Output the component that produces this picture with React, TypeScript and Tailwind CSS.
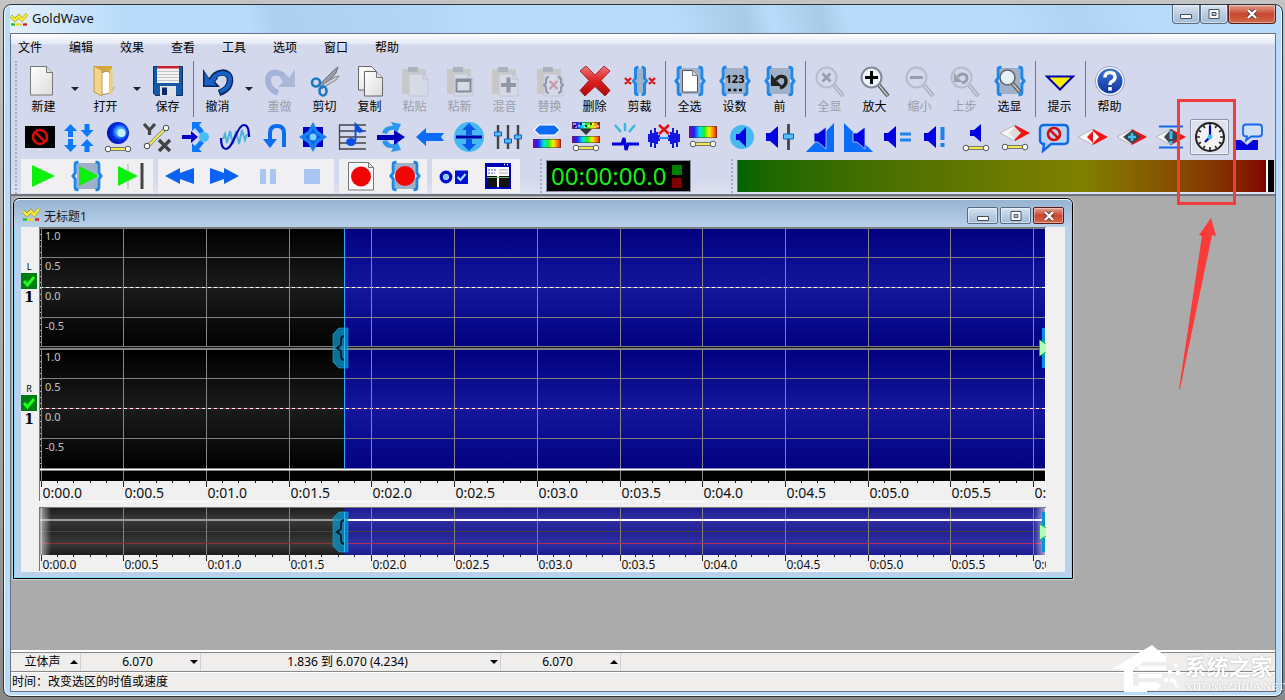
/**
 * App.tsx
 *
 * GoldWave main window: menu, tool bars, one open sound document and the
 * status bars at the bottom.
 */

import type { ReactNode } from 'react';
import clsx from 'clsx';

interface IconProps {
  readonly children: ReactNode;
  readonly className?: string;
}

function Icon({ children, className }: IconProps): React.JSX.Element {
  return (
    <svg
      viewBox="0 0 32 32"
      className={clsx('h-8 w-8 shrink-0', className)}
      fill="none"
      aria-hidden="true"
    >
      {children}
    </svg>
  );
}

/* ---------- Shared icon parts ---------- */

/** Pair of blue braces with the grey selection block behind. */
function Braces(): React.JSX.Element {
  return (
    <>
      <rect x="6" y="3" width="20" height="26" fill="#9fb0c9" />
      <g stroke="#1f86ea" strokeWidth="3">
        <path d="M7.500 2.300H6.500Q4.200 2.300 4.200 4.500V13L2 16 4.200 19V27.500Q4.200 29.700 6.500 29.700h1" />
        <path d="M24.500 2.300h1q2.300 0 2.300 2.200V13l2.200 3-2.200 3v8.500q0 2.200-2.300 2.200h-1" />
      </g>
    </>
  );
}

function Speaker({ x = 0, y = 0 }: { readonly x?: number; readonly y?: number }): React.JSX.Element {
  return (
    <path
      transform={`translate(${x} ${y})`}
      d="M3 12h4l8-7v22l-8-7H3z"
      fill="#0000e0"
    />
  );
}

/** Yellow line between two white handles. */
function Link({ y = 27 }: { readonly y?: number }): React.JSX.Element {
  return (
    <>
      <path d={`M6 ${y}H26`} stroke="#777" strokeWidth="4" />
      <path d={`M6 ${y}H26`} stroke="#f3e84a" strokeWidth="2" />
      <circle cx="6" cy={y} r="2.8" fill="#fff" stroke="#555" />
      <circle cx="26" cy={y} r="2.8" fill="#fff" stroke="#555" />
    </>
  );
}

function Rainbow({ y, h = 9 }: { readonly y: number; readonly h?: number }): React.JSX.Element {
  return (
    <>
      <rect x="2" y={y} width="28" height={h} fill="url(#rainbow)" />
      <rect x="2.5" y={y + 0.5} width="27" height={h - 1} stroke="#333" strokeOpacity=".5" />
    </>
  );
}

function Clipboard({ children }: { readonly children?: ReactNode }): React.JSX.Element {
  return (
    <g opacity=".75">
      <path d="M3 4h24v25H3z" fill="#c8c2bd" />
      <path d="M9 2h10v5H9z" fill="#9fa5b2" />
      <path d="M10 9h14l5 5v17H10z" fill="#d8dbe4" stroke="#bcc1cf" />
      <path d="M24 9v5h5" stroke="#b5bac8" />
      {children}
    </g>
  );
}

function Lens({ off, children }: { readonly off?: boolean; readonly children?: ReactNode }): React.JSX.Element {
  return (
    <g opacity={off ? 0.35 : 1}>
      <path d="M20 20l9 11" stroke="#555" strokeWidth="4" />
      <path d="M20 20l8.5 10.5" stroke="#c9ccd1" strokeWidth="1.6" />
      <circle cx="12.5" cy="12.5" r="10" fill={off ? '#d6daea' : '#eef5fc'} stroke="#858b98" strokeWidth="2" />
      {children}
    </g>
  );
}

function UndoArrow(): React.JSX.Element {
  return (
    <>
      <path d="M10 16C12 6 28 4 28 15q0 9-11 13" stroke="#06265e" strokeWidth="6.5" />
      <path d="M1 4v18h17l-5-5.5 3-3-5-4.5-4 4z" fill="#06265e" />
      <path d="M10 15.5C13 7 28 5 28 15q0 8-10 12" stroke="#1762c4" strokeWidth="4" />
      <path d="M2.5 7v13.5h12l-3-3.5 3-3-3.5-3-3.5 4z" fill="#1762c4" />
    </>
  );
}

function Document(): React.JSX.Element {
  return (
    <>
      <path d="M2.5 1.5h16l6 6V30h-22z" fill="url(#paper)" stroke="#777" />
      <path d="M18.5 1.5v6h6" fill="#ddd" stroke="#777" />
    </>
  );
}

function Diamond(): React.JSX.Element {
  return (
    <>
      <path d="M1 16L16 8v16z" fill="#f6f6f6" stroke="#aaa" strokeWidth=".8" />
      <path d="M31 16L16 8v16z" fill="#f01414" />
    </>
  );
}

function Ban({ x, y, r }: { readonly x: number; readonly y: number; readonly r: number }): React.JSX.Element {
  const d = r * 0.7;
  return (
    <g stroke="#d80a0a" strokeWidth="2.6">
      <circle cx={x} cy={y} r={r} />
      <path d={`M${x - d} ${y - d}L${x + d} ${y + d}`} />
    </g>
  );
}

/** Gradients used by several icons. */
function IconDefs(): React.JSX.Element {
  return (
    <svg className="absolute h-0 w-0" aria-hidden="true">
      <defs>
        <linearGradient id="rainbow">
          <stop offset="0" stopColor="#8a00a8" />
          <stop offset=".18" stopColor="#2020ff" />
          <stop offset=".38" stopColor="#00e0f0" />
          <stop offset=".55" stopColor="#20f020" />
          <stop offset=".72" stopColor="#f8f000" />
          <stop offset=".88" stopColor="#ff7800" />
          <stop offset="1" stopColor="#f01010" />
        </linearGradient>
        <linearGradient id="paper" x2="1" y2="1">
          <stop offset="0" stopColor="#fff" />
          <stop offset="1" stopColor="#dcdcdc" />
        </linearGradient>
        <radialGradient id="ball" cx=".6" cy=".45" r=".6">
          <stop offset="0" stopColor="#b8ecff" />
          <stop offset=".35" stopColor="#3aa0ff" />
          <stop offset=".6" stopColor="#0530e8" />
          <stop offset="1" stopColor="#0010a8" />
        </radialGradient>
        <linearGradient id="redx" x2="0" y2="1">
          <stop offset="0" stopColor="#f07878" />
          <stop offset=".5" stopColor="#dc2020" />
          <stop offset="1" stopColor="#b00808" />
        </linearGradient>
        <linearGradient id="help" x2="0" y2="1">
          <stop offset="0" stopColor="#3f78dc" />
          <stop offset="1" stopColor="#0a2f9c" />
        </linearGradient>
      </defs>
    </svg>
  );
}

function WaveLogo(): React.JSX.Element {
  return (
    <svg viewBox="0 0 18 14" className="h-3.5 w-[18px] shrink-0" aria-hidden="true">
      <path d="M1 4l4 4 4-4 3 4 5-6" fill="none" stroke="#8a8a20" strokeWidth="3.2" />
      <path d="M1 4l4 4 4-4 3 4 5-6" fill="none" stroke="#f8ee30" strokeWidth="2.4" />
      <path d="M1 12.5h4" stroke="#20c030" strokeWidth="2.4" />
      <path d="M6 12.5h6" stroke="#f0d820" strokeWidth="2.4" />
      <path d="M13 12.5h4" stroke="#d82020" strokeWidth="2.4" />
    </svg>
  );
}

/* ---------- Tool bar data ---------- */

interface Tool {
  readonly label: string;
  readonly icon: ReactNode;
  readonly disabled?: boolean;
  readonly menu?: boolean;
  readonly separator?: boolean;
}

const MENUS = ['文件', '编辑', '效果', '查看', '工具', '选项', '窗口', '帮助'];

const MAIN_TOOLS: readonly Tool[] = [
  { label: '新建', menu: true, icon: <Document /> },
  {
    label: '打开',
    menu: true,
    icon: (
      <>
        <path d="M18 24l8-3-6 9z" fill="#9aa0b0" opacity=".5" />
        <path d="M4 1h18v26l-8 3z" fill="#d9a63c" />
        <path d="M11 8l6-2 3 2v20l-9 2z" fill="#fff" stroke="#999" />
        <path d="M20 4h2.500v24L19 30z" fill="#f2cd6c" />
        <path d="M4 1l8 4v26l-8-4z" fill="#f4d488" stroke="#b98a2c" strokeWidth=".8" />
      </>
    ),
  },
  {
    label: '保存',
    separator: true,
    icon: (
      <>
        <path d="M1.5 1.5h29v29h-27l-2-2z" fill="#1558a8" stroke="#0a2f63" />
        <path d="M5 1h22v17H5z" fill="#f3f3f3" />
        <path d="M5 1h22v2.500H5z" fill="#c8202c" />
        <path d="M5 6.5h22M5 9.5h22M5 12.5h22M5 15.5h22" stroke="#c5c5c5" />
        <path d="M8 21h16v10H8z" fill="#dfe3e8" />
        <path d="M10 22.5h5V30h-5z" fill="#0b2c66" />
      </>
    ),
  },
  { label: '撤消', menu: true, icon: <UndoArrow /> },
  {
    label: '重做',
    disabled: true,
    icon: (
      <>
        <path d="M22 16C20 6 4 4 4 15q0 9 10 13" stroke="#a3b2d6" strokeWidth="6" />
        <path d="M31 4v18H14l5-5.5-3-3 5-4.5 4 4z" fill="#a9b7d9" />
      </>
    ),
  },
  {
    label: '剪切',
    icon: (
      <>
        <path d="M10 20L25 5l4-3-2 6-14 16z" fill="#9a9fa6" stroke="#555" strokeWidth=".7" />
        <path d="M14 19L26 12l4-1-3 4-12 7z" fill="#c9ccd0" stroke="#666" strokeWidth=".7" />
        <circle cx="7" cy="17.5" r="4" stroke="#1b78c4" strokeWidth="2.6" />
        <ellipse cx="14" cy="26" rx="3.5" ry="4.5" stroke="#1b78c4" strokeWidth="2.6" />
      </>
    ),
  },
  {
    label: '复制',
    icon: (
      <>
        <path d="M4.5 1.5h13l5 5V25h-18z" fill="url(#paper)" stroke="#666" />
        <path d="M10.5 6.5h12l6 6V31h-18z" fill="url(#paper)" stroke="#666" />
        <path d="M22.5 6.5v6h6" fill="#ddd" stroke="#777" />
      </>
    ),
  },
  { label: '粘贴', disabled: true, icon: <Clipboard /> },
  {
    label: '粘新',
    disabled: true,
    icon: (
      <Clipboard>
        <path d="M12.5 14.5h14v12h-14zM12 16h15" stroke="#6c7280" strokeWidth="2" />
      </Clipboard>
    ),
  },
  {
    label: '混音',
    disabled: true,
    icon: (
      <Clipboard>
        <path d="M12 20h15M19.5 12.5v15" stroke="#7b8290" strokeWidth="4" />
      </Clipboard>
    ),
  },
  {
    label: '替换',
    disabled: true,
    icon: (
      <Clipboard>
        <path
          d="M15 12q-3 0-3 3v3l-2 2 2 2v3q0 3 3 3M24 12q3 0 3 3v3l2 2-2 2v3q0 3-3 3"
          stroke="#7b8290"
          strokeWidth="2"
        />
        <path d="M15.5 16l8 8M23.5 16l-8 8" stroke="#c08898" strokeWidth="2.4" />
      </Clipboard>
    ),
  },
  {
    label: '删除',
    icon: (
      <path
        d="M1 6l6-5 9 9 9-9 6 5-9 9.500 9 10L26 31l-10-9.500L6 31l-5-5.500 9-10z"
        fill="url(#redx)"
        stroke="#8e1010"
        strokeWidth=".8"
      />
    ),
  },
  {
    label: '剪裁',
    separator: true,
    icon: (
      <>
        <rect x="12" y="4" width="8" height="24" fill="#9fb0c9" />
        <path
          d="M14.5 2.5h-1q-2 0-2 2V13l-2 3 2 3v8.500q0 2 2 2h1M17.5 2.5h1q2 0 2 2V13l2 3-2 3v8.500q0 2-2 2h-1"
          stroke="#1f86ea"
          strokeWidth="3"
        />
        <path d="M1 13l6 6M7 13l-6 6M25 13l6 6M31 13l-6 6" stroke="#d81818" strokeWidth="2.4" />
      </>
    ),
  },
  {
    label: '全选',
    icon: (
      <>
        <Braces />
        <path d="M8.5 5.5h10l5 5V27h-15z" fill="#fff" stroke="#555" />
        <path d="M18.5 5.5v5h5" fill="#ddd" stroke="#777" />
      </>
    ),
  },
  {
    label: '设数',
    icon: (
      <>
        <Braces />
        <text
          x="16"
          y="18"
          textAnchor="middle"
          fontSize="11"
          fontWeight="700"
          fill="#111"
          fontFamily="Noto Sans, sans-serif"
        >
          123
        </text>
        <path d="M9 25h3M14.5 25h3M20 25h3" stroke="#111" strokeWidth="2.6" />
      </>
    ),
  },
  {
    label: '前',
    separator: true,
    icon: (
      <>
        <Braces />
        <path d="M12 15c2-5 10-5 10 1q0 5-6 7" stroke="#222" strokeWidth="3.4" />
        <path d="M7 9v12h11l-4-4-3-3z" fill="#222" />
      </>
    ),
  },
  {
    label: '全显',
    disabled: true,
    icon: (
      <Lens off>
        <path d="M8.5 8.5l8 8M16.5 8.5l-8 8" stroke="#333" strokeWidth="2.8" />
      </Lens>
    ),
  },
  {
    label: '放大',
    icon: (
      <Lens>
        <path d="M6 12.5h13M12.5 6v13" stroke="#000" strokeWidth="3" />
      </Lens>
    ),
  },
  {
    label: '缩小',
    disabled: true,
    icon: (
      <Lens off>
        <path d="M6 12.5h13" stroke="#333" strokeWidth="3" />
      </Lens>
    ),
  },
  {
    label: '上步',
    disabled: true,
    icon: (
      <Lens off>
        <path d="M9 12c2-4 9-4 9 1q0 4-5 5" stroke="#333" strokeWidth="3" />
        <path d="M5 7v10h9l-6-5z" fill="#333" />
      </Lens>
    ),
  },
  {
    label: '选显',
    separator: true,
    icon: (
      <>
        <Braces />
        <path d="M18 18l8 9" stroke="#555" strokeWidth="4" />
        <path d="M18 18l7.500 8.500" stroke="#ccc" strokeWidth="1.6" />
        <circle cx="13.5" cy="12.5" r="7.5" fill="#e4f1fb" stroke="#666" strokeWidth="1.6" />
      </>
    ),
  },
  {
    label: '提示',
    separator: true,
    icon: <path d="M3 11.5h26l-13 13z" fill="#f8f000" stroke="#0000b0" strokeWidth="2" />,
  },
  {
    label: '帮助',
    icon: (
      <>
        <circle cx="16" cy="16" r="14.5" fill="url(#help)" stroke="#9aa7c4" />
        <circle cx="16" cy="16" r="13.3" stroke="#fff" strokeWidth="1.5" />
        <path d="M11 12.5q0-5 5-5t5 4.500q0 3-3 4.500-2 1-2 3.500" stroke="#fff" strokeWidth="3.4" />
        <path d="M14.2 22h3.600v3.600h-3.600z" fill="#fff" />
      </>
    ),
  },
];

const EFFECT_TOOLS: readonly Tool[] = [
  {
    label: '审查',
    icon: (
      <>
        <rect x="1" y="5" width="30" height="22" fill="#000" />
        <Ban x={16} y={16} r={7} />
      </>
    ),
  },
  {
    label: '压缩器',
    icon: (
      <g fill="#0a78ff">
        <path d="M7.5 3l6.500 7h-4v6H5v-6H1zM7.5 31L1 24h4v-6h5v6h4z" />
        <path d="M24 16l-6.500-7h4V3h5v6h4zM24 18l6.500 7h-4v6h-5v-6h-4z" />
      </g>
    ),
  },
  {
    label: '多普勒',
    icon: (
      <>
        <circle cx="16" cy="12" r="11" fill="url(#ball)" />
        <circle cx="19.5" cy="12" r="4" fill="#c8f0ff" />
        <Link y={28} />
      </>
    ),
  },
  {
    label: '动态',
    icon: (
      <>
        <path d="M3 3l5.500 6L14 3M8.5 8v6" stroke="#444" strokeWidth="3.2" />
        <path d="M18 19l11 11M29 19L18 30" stroke="#444" strokeWidth="3.4" />
        <path d="M7 25L25 7" stroke="#888" strokeWidth="3.6" />
        <path d="M7 25L25 7" stroke="#f3e84a" strokeWidth="2" />
        <circle cx="6" cy="25" r="2.8" fill="#fff" stroke="#444" />
        <circle cx="25" cy="7" r="2.8" fill="#fff" stroke="#444" />
      </>
    ),
  },
  {
    label: '回声',
    icon: (
      <>
        <path
          d="M12 1h10l-3 3 5 6-4 3-5-6-3 3zM12 31h10l-3-3 5-6-4-3-5 6-3-3z"
          fill="#0a78ff"
        />
        <circle cx="24" cy="16" r="5" fill="#46bdf5" />
        <path d="M2 14h9v-4l7 6-7 6v-4H2z" fill="#0000c8" />
      </>
    ),
  },
  {
    label: '滤波',
    icon: (
      <>
        <path d="M4 18l2-5 2 9 3-12 3 13 3-13 3 13 3-14 3 10 2-6" stroke="#4fb4dc" strokeWidth="2" />
        <path d="M2 17q0 11 5 11 4 0 9-12T25 4q5 0 5 12" stroke="#0000b8" strokeWidth="2.2" />
      </>
    ),
  },
  {
    label: '反转',
    icon: (
      <>
        <path d="M26 26V12q0-7-7-7t-7 7v7" stroke="#0a6cf0" strokeWidth="4" />
        <path d="M5 18h14l-7 9z" fill="#0a6cf0" />
      </>
    ),
  },
  {
    label: '机械化',
    icon: (
      <>
        <rect x="6" y="6" width="20" height="20" fill="#0000c8" />
        <path d="M16 1l5 9 9 6-9 6-5 9-5-9-9-6 9-6z" fill="#1a82f0" />
        <path d="M16 8l3 5 5 3-5 3-3 5-3-5-5-3 5-3z" fill="#0a5ae8" />
        <circle cx="16" cy="16" r="3.5" fill="#7ad4ff" />
      </>
    ),
  },
  {
    label: '音调',
    icon: (
      <>
        <path d="M3 4h27M3 10h27M3 16h27M3 22h27M3 28h27M3.5 4v25" stroke="#444" strokeWidth="1.3" />
        <path d="M19.5 20V3l7 7-3 1-3-3" fill="#0a4ae0" stroke="#0a50e8" strokeWidth="1.8" />
        <ellipse cx="15" cy="21" rx="5" ry="4" fill="#0a50e8" />
      </>
    ),
  },
  {
    label: '混响',
    icon: (
      <>
        <path
          d="M7 12Q9 4 18 5l-2-4 10 2-4 9-2-3q-6-1-8 4zM7 20q2 8 11 7l-2 4 10-2-4-9-2 3q-6 1-8-4z"
          fill="#2a98f0"
        />
        <path d="M2 14h17V9l11 7-11 8v-5H2z" fill="#0000b8" />
      </>
    ),
  },
  { label: '倒转', icon: <path d="M2 16l10-9v5h18l-3 4 3 4H12v5z" fill="#0a6cf8" /> },
  {
    label: '偏移',
    icon: (
      <>
        <circle cx="16" cy="16" r="15" fill="#46b8f4" />
        <path d="M16 2l7 7h-4v5h-6V9H9zM16 30l7-7h-4v-5h-6v5H9z" fill="#0a58e8" />
        <path d="M3 16h26" stroke="#0000a8" strokeWidth="3" />
      </>
    ),
  },
  {
    label: '均衡器',
    icon: (
      <>
        <path d="M6 4v24M16 4v24M26 4v24" stroke="#444" strokeWidth="2.4" />
        <path
          d="M2.5 11h7v4h-7zM12.5 18h7v4h-7zM22.5 14h7v4h-7z"
          fill="#58c0f4"
          stroke="#0a60c8"
        />
      </>
    ),
  },
  {
    label: '音效',
    icon: (
      <>
        <path d="M8 4h16l5 5-5 5H8L3 9z" fill="#0a6cf8" stroke="#fff" strokeWidth="1.2" />
        <Rainbow y={18} />
      </>
    ),
  },
  {
    label: '降噪',
    icon: (
      <>
        <Rainbow y={1} h={7} />
        <path
          d="M3 3h3M8 5h2M12 3h3M17 5h3M22 3h2M26 5h3M5 6h2M14 6h2M24 6h2"
          stroke="#fff"
          strokeWidth="1.2"
        />
        <path d="M4 5h2M10 3h2M15 5h2M20 3h2M28 3h1" stroke="#000" strokeWidth="1.4" />
        <path d="M10 8h12l-6 6z" fill="#333" />
        <Rainbow y={15} h={7} />
        <Link y={27} />
      </>
    ),
  },
  {
    label: '爆破音',
    icon: (
      <>
        <path d="M16 10V2M12 11L6 4M20 11l6-7" stroke="#35b6e4" strokeWidth="2.4" />
        <path d="M3 23h10l2-6 2 12 2-6h11" stroke="#0000d8" strokeWidth="3" />
      </>
    ),
  },
  {
    label: '静音',
    icon: (
      <>
        <path
          d="M1 13v8M3 9v17M5 12v10M7 7v20M9 11v12M11 14v6M31 13v8M29 9v17M27 12v10M25 7v20M23 11v12M21 14v6"
          stroke="#0000e0"
          strokeWidth="1.8"
        />
        <path d="M11 17h10" stroke="#1e90ff" strokeWidth="2" />
        <path d="M11 4l10 9M21 4l-10 9" stroke="#e01010" strokeWidth="2.6" />
      </>
    ),
  },
  {
    label: '频谱',
    icon: (
      <>
        <Rainbow y={5} h={12} />
        <Link y={23} />
      </>
    ),
  },
  {
    label: '自动增益',
    icon: (
      <>
        <circle cx="16" cy="16" r="12" fill="#46b8f4" />
        <path d="M10 13h3l7-7v20l-7-7h-3z" fill="#0000e0" />
      </>
    ),
  },
  {
    label: '改变音量',
    icon: (
      <>
        <Speaker x={-2} />
        <path d="M23.5 3v26" stroke="#444" strokeWidth="2.8" />
        <path d="M18.5 13h10v5h-10z" fill="#58c0f4" stroke="#0a60c8" />
      </>
    ),
  },
  {
    label: '淡入',
    icon: (
      <>
        <path d="M2 31L30 2v29z" fill="#0a6cf8" />
        <path d="M10 12h4l8-6v22l-8-7h-4z" fill="#0000e0" stroke="#d3d8ec" strokeWidth=".8" />
      </>
    ),
  },
  {
    label: '淡出',
    icon: (
      <>
        <path d="M1 2v29h29z" fill="#0a6cf8" />
        <path d="M10 12h4l8-6v22l-8-7h-4z" fill="#0000e0" stroke="#d3d8ec" strokeWidth=".8" />
      </>
    ),
  },
  {
    label: '匹配音量',
    icon: (
      <>
        <Speaker x={-1} />
        <path d="M18 13h11M18 19h11" stroke="#1e82f0" strokeWidth="3" />
      </>
    ),
  },
  {
    label: '最大化音量',
    icon: (
      <>
        <Speaker />
        <path d="M21.5 6v13M21.5 22v4" stroke="#1e82f0" strokeWidth="4" />
      </>
    ),
  },
  {
    label: '外形音量',
    icon: (
      <>
        <path d="M10 9h4l7-6v18l-7-6h-4z" fill="#0000e0" />
        <Link y={27} />
      </>
    ),
  },
  {
    label: '声像',
    icon: (
      <>
        <g transform="translate(0 -4)">
          <Diamond />
          <path d="M16 10l6 6-6 6-6-6z" fill="#ddd" />
        </g>
        <Link y={26} />
      </>
    ),
  },
  {
    label: '消音',
    icon: (
      <>
        <path
          d="M6 4h20q4 0 4 4v11q0 4-4 4H13l-8 7 1-7q-4 0-4-4V8q0-4 4-4z"
          fill="#b8d4f2"
          stroke="#1268e8"
          strokeWidth="2.4"
        />
        <Ban x={16} y={13} r={6} />
      </>
    ),
  },
  {
    label: '声道混音',
    icon: (
      <>
        <Diamond />
        <path d="M16 10v12l-6-6z" fill="#f01414" />
        <path d="M16 10v12l6-6z" fill="#fff" />
      </>
    ),
  },
  {
    label: '最大匹配',
    icon: (
      <>
        <Diamond />
        <path d="M16 9l9 7-9 7-9-7z" fill="#3c4450" />
        <path d="M12 16h8M16 12v8" stroke="#3cc0f0" strokeWidth="2.6" />
      </>
    ),
  },
  {
    label: '立体声中置',
    icon: (
      <>
        <path d="M4 5.500h24M4 26.500h24" stroke="#1268e8" strokeWidth="2.2" />
        <Diamond />
        <path d="M16 8l8 8-8 8-7-8z" fill="#3c4450" />
        <path d="M16 10v8M16 20v3" stroke="#3cc0f0" strokeWidth="3" />
      </>
    ),
  },
  {
    label: '时间',
    icon: (
      <>
        <circle cx="16" cy="16" r="14" fill="#f2f2f2" stroke="#222" strokeWidth="2" />
        <g stroke="#222" strokeWidth="1.6">
          <path d="M16 3v3M16 26v3M3 16h3M26 16h3" />
          <path d="M9.5 4.7l1.300 2.300M21.2 25l1.300 2.300M4.7 9.5l2.300 1.300M25 21.2l2.300 1.300M4.7 22.5l2.300-1.300M25 10.800l2.300-1.300M9.5 27.300l1.300-2.300M21.200 7l1.300-2.300" />
        </g>
        <path d="M16 17V5M16 16l-5 5" stroke="#0000c8" strokeWidth="2.2" />
        <circle cx="16" cy="16" r="2.4" fill="#3cc0f0" />
      </>
    ),
  },
  {
    label: '语音转换',
    icon: (
      <>
        <path d="M3 19h5l6 5 6-5h5v10H3z" fill="#0000e0" />
        <path
          d="M13 3.5h13q3 0 3 3v6q0 3-3 3h-8l-5 4 1-4q-4 0-4-3v-6q0-3 3-3z"
          fill="#cfe0f6"
          stroke="#1268e8"
          strokeWidth="1.8"
        />
      </>
    ),
  },
];

/** Transport buttons, one array for each light panel. */
const TRANSPORT_GROUPS: readonly (readonly Tool[])[] = [
  [
    { label: '播放', icon: <path d="M5 5l23 11L5 27z" fill="#0cf00c" /> },
    {
      label: '播放选区',
      icon: (
        <>
          <Braces />
          <path d="M8 6l20 10L8 26z" fill="#0cf00c" />
        </>
      ),
    },
    {
      label: '播放到结尾',
      icon: (
        <>
          <path d="M13 4v25" stroke="#a8b8a8" />
          <path d="M3 6l20 10L3 26z" fill="#0cf00c" />
          <path d="M27 3v26" stroke="#444" strokeWidth="3" />
        </>
      ),
    },
  ],
  [
    { label: '快退', icon: <path d="M1 16l15-8v5l14-5v16l-14-5v5z" fill="#0a62f4" /> },
    { label: '快放', icon: <path d="M31 16L16 8v5L2 8v16l14-5v5z" fill="#0a62f4" /> },
    { label: '暂停', disabled: true, icon: <path d="M8 9h6v15H8zM18 9h6v15h-6z" fill="#a9c5f2" /> },
    { label: '停止', disabled: true, icon: <path d="M8 9h16v15H8z" fill="#a9c5f2" /> },
  ],
  [
    {
      label: '录音',
      icon: (
        <>
          <path d="M3.5 2.5h20l5 5V30h-25z" fill="#f8f8f8" stroke="#777" />
          <path d="M23.5 2.5v5h5" stroke="#777" />
          <circle cx="16" cy="16.5" r="10" fill="#f00404" />
        </>
      ),
    },
    {
      label: '录音选区',
      icon: (
        <>
          <Braces />
          <circle cx="16" cy="16" r="10" fill="#f00404" />
        </>
      ),
    },
  ],
  [
    {
      label: '控制器属性',
      icon: (
        <>
          <circle cx="8" cy="17" r="4.7" stroke="#0010d0" strokeWidth="3.5" />
          <circle cx="8" cy="17" r="2.4" fill="#8cc8f8" />
          <path d="M17 10.5h13V24H17z" fill="#0010d0" />
          <path d="M19.5 17l3 3 5-6" stroke="#a8e0ff" strokeWidth="2" />
        </>
      ),
    },
    {
      label: '窗口布局',
      icon: (
        <>
          <rect x="4" y="4" width="24" height="24" fill="#fff" stroke="#0000b8" strokeWidth="2" />
          <path d="M3 5h26" stroke="#0000b8" strokeWidth="4" />
          <path d="M22 4.500h1M25 4.500h1" stroke="#fff" strokeWidth="1.500" />
          <path d="M6 10h8M6 13h7" stroke="#3858c8" strokeDasharray="2 1" />
          <path d="M17 10h9M17 13h9" stroke="#a8a8a8" />
          <path d="M5 16h10v11H5zM17 16h10v11H17z" fill="#111" />
          <path d="M5 17.5h22" stroke="#60c060" />
        </>
      ),
    },
  ],
];

/* ---------- Window chrome ---------- */

interface CaptionButtonsProps {
  readonly buttonClass: string;
  readonly closeClass: string;
}

function CaptionButtons({ buttonClass, closeClass }: CaptionButtonsProps): React.JSX.Element {
  const glass =
    'flex items-center justify-center border border-[#5b6b7e] bg-linear-to-b from-[#d6e3f0] via-[#b9cde2] via-50% to-[#a3bcd6] shadow-[inset_0_0_0_1px_rgba(255,255,255,0.5)]';
  return (
    <>
      <button type="button" aria-label="最小化" className={clsx(glass, buttonClass)}>
        <svg viewBox="0 0 12 10" className="h-2.5 w-3" aria-hidden="true">
          <path d="M.5 5.5h11v4H.5z" fill="#fff" stroke="#44505e" />
        </svg>
      </button>
      <button type="button" aria-label="最大化" className={clsx(glass, buttonClass)}>
        <svg viewBox="0 0 12 10" className="h-2.5 w-3" aria-hidden="true">
          <path
            d="M1 .5h10v9H1zM4 3.5h4v3H4z"
            fill="#fff"
            fillRule="evenodd"
            stroke="#44505e"
          />
        </svg>
      </button>
      <button
        type="button"
        aria-label="关闭"
        className={clsx(
          'flex items-center justify-center border border-[#5a1c16] bg-linear-to-b from-[#e3a091] via-[#c9452f] via-50% to-[#cf6a4a] shadow-[inset_0_0_0_1px_rgba(255,255,255,0.4)]',
          closeClass,
        )}
      >
        <svg viewBox="0 0 12 10" className="h-2.5 w-3" aria-hidden="true">
          <path d="M2 1l8 8M10 1L2 9" stroke="#5b3a3a" strokeWidth="4" />
          <path d="M2 1l8 8M10 1L2 9" stroke="#fff" strokeWidth="2.4" />
        </svg>
      </button>
    </>
  );
}

function Grip(): React.JSX.Element {
  return <span className="w-0 shrink-0 self-stretch border-l-2 border-dotted border-[#a7aec4]" />;
}

function MainToolbar(): React.JSX.Element {
  return (
    <div className="flex h-14 pl-px" role="toolbar" aria-label="工具栏">
      {MAIN_TOOLS.map((tool) => (
        <div key={tool.label} className="flex shrink-0">
          <button
            type="button"
            disabled={tool.disabled}
            className="flex w-[45px] flex-col items-center pt-1 text-xs leading-4 text-black disabled:text-[#9a9eab]"
          >
            <Icon>{tool.icon}</Icon>
            <span className="pt-0.5">{tool.label}</span>
          </button>
          {tool.menu && (
            <button
              type="button"
              aria-label={`${tool.label}菜单`}
              className="flex w-[17px] items-center justify-center"
            >
              <svg viewBox="0 0 8 4" className="h-1 w-2" aria-hidden="true">
                <path d="M0 0h8L4 4z" fill="#222" />
              </svg>
            </button>
          )}
          {tool.separator && <span className="ml-[3px] mr-px w-px bg-[#70758a]" />}
        </div>
      ))}
    </div>
  );
}

function EffectToolbar(): React.JSX.Element {
  return (
    <div className="flex h-10" role="toolbar" aria-label="效果栏">
      {EFFECT_TOOLS.map((tool) => (
        <button
          key={tool.label}
          type="button"
          aria-label={tool.label}
          className={clsx(
            'flex w-[39px] shrink-0 items-center justify-center',
            tool.label === '时间' &&
              'my-0.5 rounded-xs border border-[#8d93a6] bg-[#dfe2ee] shadow-[inset_0_0_0_1px_#f2f3f8]',
          )}
        >
          <Icon>{tool.icon}</Icon>
        </button>
      ))}
    </div>
  );
}

function ControlBar(): React.JSX.Element {
  return (
    <div className="mt-0.5 flex h-[34px] items-stretch pl-px">
      <div className="flex gap-[5px]">
        {TRANSPORT_GROUPS.map((group, index) => (
          <div key={index} className="flex bg-[#f0f0f2]">
            {group.map((tool) => (
              <button
                key={tool.label}
                type="button"
                aria-label={tool.label}
                disabled={tool.disabled}
                className="flex w-11 shrink-0 items-center justify-center"
              >
                <Icon>{tool.icon}</Icon>
              </button>
            ))}
          </div>
        ))}
      </div>

      <div className="ml-5 flex">
        <Grip />
      </div>
      <div className="my-px ml-1 flex shrink-0 items-center gap-1.5 border border-[#8a8fa2] bg-black pl-1 pr-2">
        <output className="text-2xl leading-7 text-[#14f014]">00:00:00.0</output>
        <span className="flex flex-col gap-[3px]">
          <span className="h-2.5 w-2.5 bg-[#008000]" />
          <span className="h-2.5 w-2.5 bg-[#800000]" />
        </span>
      </div>

      <div className="ml-10 flex">
        <Grip />
      </div>
      <div className="my-px ml-1 mr-px flex flex-1 border-l border-[#19b019] bg-black">
        <div className="flex-1 border-r-2 border-white bg-linear-to-r from-[#006400] via-[#808000] via-65% to-[#800000]" />
        <div className="w-1.5" />
      </div>
    </div>
  );
}

/* ---------- Sound document ---------- */

const LEFT = 40;
const RIGHT = 1045;
const SELECTION = 344;
const HALF_SECOND = 82.7;
const TICKS = Array.from({ length: 13 }, (_, index) => ({
  x: Math.round(LEFT + 0.6 + index * HALF_SECOND) + 0.5,
  label: `0:0${(index / 2).toFixed(1)}`,
}));
const MINOR_TICKS = Array.from({ length: 61 }, (_, index) => index)
  .filter((index) => index % 5 !== 0)
  .map((index) => Math.round(LEFT + (index * HALF_SECOND) / 5) + 0.5);

const CHANNELS = [
  { id: 'L', top: 229, backing: '#8a8a8a' },
  { id: 'R', top: 350, backing: '#d02040' },
];

interface TimeAxisProps {
  readonly y: number;
  readonly fontSize: number;
  readonly baseline: number;
}

function TimeAxis({ y, fontSize, baseline }: TimeAxisProps): React.JSX.Element {
  return (
    <>
      {MINOR_TICKS.map((x) => (
        <path key={x} d={`M${x} ${y}v2`} stroke="#222" />
      ))}
      {TICKS.map(({ x, label }) => (
        <g key={label}>
          <path d={`M${x} ${y}v6`} stroke="#222" />
          <text x={x + 1} y={baseline} fontSize={fontSize} fill="#111">
            {label}
          </text>
        </g>
      ))}
    </>
  );
}

/** Selection start handle, centred on the given height. */
function StartHandle({ y }: { readonly y: number }): React.JSX.Element {
  return (
    <g transform={`translate(333 ${y - 20})`}>
      <path
        d="M0 6L6 0h9v40H6l-6-6z"
        fill="#0a90c0"
        fillOpacity=".8"
        stroke="#18a8d8"
        strokeOpacity=".6"
      />
      <path d="M12 8q-4 0-4 4v5l-4 3 4 3v5q0 4 4 4" fill="none" stroke="#062028" strokeWidth="2" />
      <path d="M11.5 0v40" stroke="#28b8ff" />
    </g>
  );
}

function EndHandle({ y }: { readonly y: number }): React.JSX.Element {
  return (
    <>
      <path d={`M1042 ${y - 20}h3v40h-3z`} fill="#0a90e0" />
      <path d={`M1039.5 ${y - 8}l7 4v8l-7 4z`} fill="#b0ffb0" stroke="#18c018" />
    </>
  );
}

function WaveView(): React.JSX.Element {
  return (
    <svg
      viewBox="39 228 1007 277"
      className="h-[277px] w-[1007px] shrink-0"
      fontFamily="Noto Sans, sans-serif"
      role="img"
      aria-label="波形"
    >
      <defs>
        <linearGradient id="idle" x2="0" y2="1">
          <stop offset="0" stopColor="#000" />
          <stop offset=".5" stopColor="#1b1b1b" />
          <stop offset="1" stopColor="#000" />
        </linearGradient>
        <linearGradient id="chosen" x2="0" y2="1">
          <stop offset="0" stopColor="#000080" />
          <stop offset=".5" stopColor="#16169c" />
          <stop offset="1" stopColor="#000080" />
        </linearGradient>
      </defs>
      <rect x="39" y="228" width="1007" height="277" fill="#f0f0f0" />
      <rect x={LEFT} y="228" width={RIGHT - LEFT} height="254" fill="#000" />

      {CHANNELS.map(({ id, top, backing }) => (
        <g key={id}>
          <rect x={LEFT} y={top} width={SELECTION - LEFT} height="120" fill="url(#idle)" />
          <rect x={SELECTION} y={top} width={RIGHT - SELECTION} height="120" fill="url(#chosen)" />
          <path
            d={`M${LEFT} ${top + 0.5}H${RIGHT}M${LEFT} ${top + 29.5}H${RIGHT}M${LEFT} ${top + 89.5}H${RIGHT}`}
            stroke="#808080"
          />
          <path d={`M${LEFT} ${top + 59.5}H${RIGHT}`} stroke={backing} />
          <path d={`M${LEFT} ${top + 59.5}H${RIGHT}`} stroke="#fff" strokeDasharray="3 3" />
          {Array.from({ length: 19 }, (_, index) => (
            <path key={index} d={`M${LEFT} ${top + 6.5 + index * 6}h2`} stroke="#aaa" />
          ))}
          {['1.0', '0.5', '0.0', '-0.5'].map((text, index) => (
            <text
              key={text}
              x="45"
              y={top + 12 + index * 30}
              fontSize="11"
              fill="#c4c4c4"
            >
              {text}
            </text>
          ))}
        </g>
      ))}

      {TICKS.map(({ x }) => (
        <path key={x} d={`M${x} 228V482`} stroke="#868686" />
      ))}
      <path d={`M${LEFT} 348.5H${RIGHT}`} stroke="#111" />
      <path d={`M${LEFT} 347.5H${RIGHT}M${LEFT} 349.5H${RIGHT}`} stroke="#808080" />
      <path d={`M${LEFT} 470.5H${RIGHT}`} stroke="#fff" strokeWidth="2" />
      <path d={`M${SELECTION + 0.5} 229V470`} stroke="#28a8ff" />
      <path d="M39.5 228V502M39 228.5H1046" stroke="#777" />
      <path d="M39 502.5H1046M1045.5 229V503" stroke="#fff" />

      <TimeAxis y={482} fontSize={14} baseline={499} />
      <StartHandle y={349} />
      <EndHandle y={349} />
    </svg>
  );
}

function Overview(): React.JSX.Element {
  return (
    <svg
      viewBox="39 508 1007 65"
      className="h-[65px] w-[1007px] shrink-0"
      fontFamily="Noto Sans, sans-serif"
      role="img"
      aria-label="概览"
    >
      <defs>
        <linearGradient id="idle2" x2="0" y2="1">
          <stop offset="0" stopColor="#1c1c1c" />
          <stop offset=".25" stopColor="#3a3a3a" />
          <stop offset=".5" stopColor="#262626" />
          <stop offset=".75" stopColor="#3a3a3a" />
          <stop offset="1" stopColor="#1c1c1c" />
        </linearGradient>
        <linearGradient id="chosen2" x2="0" y2="1">
          <stop offset="0" stopColor="#1c1c90" />
          <stop offset=".25" stopColor="#3030a4" />
          <stop offset=".5" stopColor="#202094" />
          <stop offset=".75" stopColor="#3030a4" />
          <stop offset="1" stopColor="#1c1c90" />
        </linearGradient>
        <linearGradient id="edgeL">
          <stop offset="0" stopColor="#fff" stopOpacity=".6" />
          <stop offset="1" stopColor="#fff" stopOpacity="0" />
        </linearGradient>
        <linearGradient id="edgeR">
          <stop offset="0" stopColor="#fff" stopOpacity="0" />
          <stop offset="1" stopColor="#fff" stopOpacity=".6" />
        </linearGradient>
      </defs>
      <rect x="39" y="508" width="1007" height="65" fill="#f0f0f0" />
      <rect x={LEFT} y="509" width={SELECTION - LEFT} height="47" fill="url(#idle2)" />
      <rect x={SELECTION} y="509" width={RIGHT - SELECTION} height="47" fill="url(#chosen2)" />
      <path d={`M${LEFT} 532.5H${RIGHT}`} stroke="#444" />
      {TICKS.map(({ x }) => (
        <path key={x} d={`M${x} 509V556`} stroke="#808080" />
      ))}
      <path d={`M${LEFT} 521H${SELECTION}`} stroke="#9a9a9a" strokeWidth="2" />
      <path d={`M${SELECTION} 521H${RIGHT}`} stroke="#fff" strokeWidth="2" />
      <path d={`M${LEFT} 544.5H${SELECTION}`} stroke="#8c3030" />
      <path d={`M${SELECTION} 544.5H${RIGHT}`} stroke="#b82858" />
      <rect x={LEFT} y="509" width="11" height="47" fill="url(#edgeL)" />
      <rect x="1034" y="509" width="11" height="47" fill="url(#edgeR)" />
      <path d="M39.5 508V572M39 508.5H1046" stroke="#777" />
      <path d="M39 572.5H1046M1045.5 509V573" stroke="#fff" />
      <TimeAxis y={556} fontSize={12} baseline={570} />
      <StartHandle y={533} />
      <EndHandle y={533} />
    </svg>
  );
}

function ChannelSwitch({ name }: { readonly name: string }): React.JSX.Element {
  return (
    <div className="flex flex-col items-center">
      <label className="flex flex-col items-center text-[9px] leading-3 text-black">
        {name}
        <span className="relative h-4 w-4">
          <input
            type="checkbox"
            defaultChecked
            className="peer absolute inset-0 h-4 w-4 appearance-none bg-[#007d10]"
          />
          <svg
            viewBox="0 0 16 16"
            className="pointer-events-none absolute inset-0 hidden h-4 w-4 peer-checked:block"
            aria-hidden="true"
          >
            <path d="M3 8l3.500 4L13 4" fill="none" stroke="#20ff20" strokeWidth="3" />
          </svg>
        </span>
      </label>
      <span className="font-['DejaVu_Serif',serif] text-sm font-bold leading-4 text-black">1</span>
    </div>
  );
}

function SoundDocument(): React.JSX.Element {
  return (
    <section
      aria-label="无标题1"
      className="w-[1060px] rounded-t-md border border-black bg-linear-to-b from-[#9fbbd9] to-[#b9d1ea] to-5% pb-1.5 shadow-[inset_0_0_0_1px_#7fdcf4] outline outline-white/40"
    >
      <header className="flex h-7 items-center gap-1 rounded-t-md border-t border-white bg-linear-to-b from-[#98b4d3] to-[#b9d1e9] pl-2 pr-2">
        <WaveLogo />
        <h2 className="flex-1 pt-1.5 text-xs text-[#1a1a1a]">无标题1</h2>
        <div className="flex gap-0.5 pt-1">
          <CaptionButtons
            buttonClass="h-[17px] w-[31px] rounded-xs"
            closeClass="h-[17px] w-[31px] rounded-xs"
          />
        </div>
      </header>
      <div className="mx-[7px] flex bg-[#f0f0f0]">
        <div className="flex w-[18px] shrink-0 flex-col gap-[78px] pr-0.5 pt-[34px]">
          <ChannelSwitch name="L" />
          <ChannelSwitch name="R" />
        </div>
        <div className="flex flex-col gap-[3px]">
          <WaveView />
          <Overview />
        </div>
      </div>
    </section>
  );
}

/* ---------- Status bar ---------- */

const STATUS_FIELDS = [
  { text: '立体声', up: true, width: 'w-[70px]' },
  { text: '6.070', up: false, width: 'w-[120px]' },
  { text: '1.836 到 6.070 (4.234)', up: false, width: 'w-[300px]' },
  { text: '6.070', up: true, width: 'w-[120px]' },
];

function StatusBar(): React.JSX.Element {
  return (
    <footer className="shrink-0 bg-[#f0eded] text-xs text-black">
      <div className="flex h-5 border-y border-[#888]">
        {STATUS_FIELDS.map(({ text, up, width }, index) => (
          <button
            key={index}
            type="button"
            className={clsx('flex items-center border-r border-[#d4d0d0] pl-1 pr-0.5', width)}
          >
            <span className="flex-1 text-center leading-4">{text}</span>
            <svg viewBox="0 0 8 4" className="h-1 w-2" aria-hidden="true">
              <path d={up ? 'M0 4h8L4 0z' : 'M0 0h8L4 4z'} fill="#000" />
            </svg>
          </button>
        ))}
      </div>
      <p className="border-t border-white pl-px leading-[18px]">时间：改变选区的时值或速度</p>
    </footer>
  );
}

/* ---------- Overlays ---------- */

function Callout(): React.JSX.Element {
  return (
    <div className="pointer-events-none absolute right-[49px] top-[99px] flex w-[59px] flex-col">
      <span className="h-[106px] border-3 border-[#f23c3c]" />
      <svg viewBox="0 0 59 186" className="h-[186px] w-[59px]" aria-hidden="true">
        <path d="M2 184L25 31l-3-1 12-17 5 18-4-1L3 184z" fill="#fb3a3a" />
      </svg>
    </div>
  );
}

function Watermark(): React.JSX.Element {
  return (
    <div className="pointer-events-none absolute bottom-2 right-0 flex items-end text-white">
      <svg viewBox="0 0 74 48" className="h-12 w-[74px]" fill="#fff" aria-hidden="true">
        <path d="M1 25L41 1l14 12v5H33L22 25v20h14v3H13V25z" />
        <path d="M28 22h27v4H28zM28 30h23v4H28zM28 38h18l4 4-4 4H22v-4h6z" />
        <path d="M57 26h4v4h-4zM63 20h3v3h-3zM65 27h4v4h-4zM59 34h4v4h-4zM53 34h4v4h-4zM65 35q0 6 5 11-8-4-8-9z" />
      </svg>
      <div className="flex flex-col drop-shadow-[0_0_1px_rgba(0,0,0,0.25)]">
        <span className="text-[22px] font-bold leading-7">系统之家</span>
        <span className="font-['Liberation_Serif',serif] text-[11px] leading-3">XITONGZHIJIA.NET</span>
      </div>
    </div>
  );
}

export default function App(): React.JSX.Element {
  return (
    <div className="relative flex h-screen min-h-[640px] flex-col overflow-hidden bg-linear-to-b from-[#c4c4c4] to-[#8a8a8a] pb-[3px] pl-[3px] pr-[2px] pt-[4px] font-['Noto_Sans','Noto_Sans_CJK_SC',sans-serif]">
      <IconDefs />
      <div className="flex min-h-0 flex-1 flex-col rounded-lg border border-[#2b333d] bg-[#badcfb] px-1.5 pb-1 shadow-[inset_0_0_0_1px_rgba(255,255,255,0.8)]">
        <header className="flex h-7 shrink-0 items-center gap-1 bg-[linear-gradient(75deg,#e4f0fa_0%,#badcfb_9%,#badcfb_19%,#aecff0_21%,#b4d5f6_33%,#badcfb_37%,#badcfb_52%,#a9cbe8_58%,#badcfb_60%,#a9cbe8_64%,#badcfb_66%,#badcfb_78%,#b0d3f3_84%,#badcfb_90%)]">
          <WaveLogo />
          <h1 className="flex-1 text-[13px] text-[#111]">GoldWave</h1>
          <div className="flex self-start">
            <CaptionButtons
              buttonClass="h-[19px] w-7 rounded-b-sm border-t-0"
              closeClass="h-[19px] w-12 rounded-b-sm border-t-0"
            />
          </div>
        </header>

        <main className="flex min-h-0 flex-1 flex-col overflow-hidden border border-[#667080] bg-[#ababab]">
          <div className="shrink-0 border-b-2 border-[#6f7480] bg-linear-to-b from-[#d3d8ec] from-90% to-[#dfe2f0]">
            <nav className="flex h-[27px] bg-linear-to-b from-white via-[#e6e9f5] via-35% to-[#d3d8ec] to-40% pl-[5px]">
              {MENUS.map((menu) => (
                <button key={menu} type="button" className="w-[51px] pl-0.5 text-left text-xs text-black">
                  {menu}
                </button>
              ))}
            </nav>
            <div className="flex">
              <div className="flex pl-1 pr-[3px]">
                <Grip />
              </div>
              <div className="flex min-w-0 flex-1 flex-col pb-px">
                <MainToolbar />
                <EffectToolbar />
                <ControlBar />
              </div>
            </div>
          </div>

          <div className="min-h-0 flex-1 overflow-hidden border-b-2 border-white pl-0.5 pt-0.5">
            <SoundDocument />
          </div>
          <StatusBar />
        </main>
      </div>
      <Callout />
      <Watermark />
    </div>
  );
}
